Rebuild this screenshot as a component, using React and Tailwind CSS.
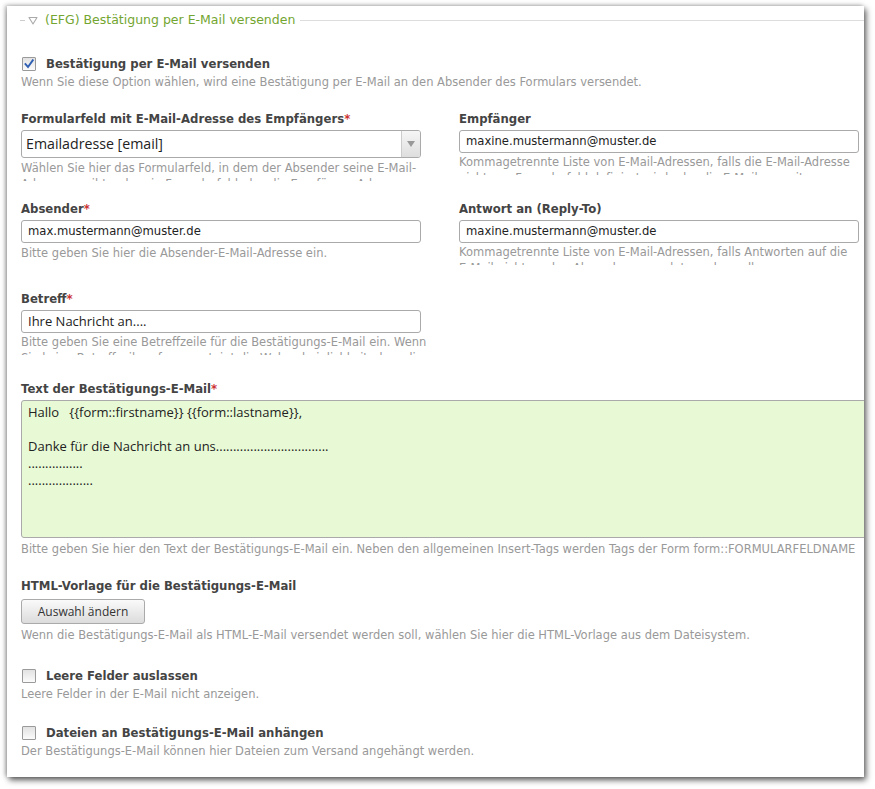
import React from "react";

const dv = { fontFamily: '"DejaVu Sans", Verdana, sans-serif' };
const os = { fontFamily: '"Open Sans", "Noto Sans", sans-serif' };

function Checkbox({ checked }) {
  return (
    <span className="inline-flex w-[14px] h-[14px] shrink-0 items-center justify-center border border-[#9a9a9a] bg-gradient-to-b from-[#e2e2e2] to-[#fbfbfb] rounded-[1px]">
      {checked && (
        <svg width="10" height="10" viewBox="0 0 10 10">
          <path d="M1.5 5.2 L4 8 L8.8 1.2" fill="none" stroke="#2f5fb3" strokeWidth="1.9" strokeLinecap="square" />
        </svg>
      )}
    </span>
  );
}

function Label({ children, req }) {
  return (
    <div className="h-[16px] leading-[16px] text-[11.7px] font-bold text-[#444] whitespace-nowrap" style={dv}>
      {children}
      {req && <span className="text-[#c33]">*</span>}
    </div>
  );
}

function Desc({ children, clip, className = "" }) {
  return (
    <div
      className={"text-[11.5px] leading-[16px] text-[#999] " + (clip ? "h-[21px] overflow-hidden " : "") + className}
      style={dv}
    >
      {children}
    </div>
  );
}

function TextInput({ value }) {
  return (
    <div
      className="mt-[3px] w-[400px] h-[23px] border border-[#aaa] rounded-[3px] bg-white pl-[6px] flex items-center text-[11.6px] text-[#222]"
      style={dv}
    >
      {value}
    </div>
  );
}

function CheckRow({ checked, label, desc }) {
  return (
    <div>
      <div className="flex items-center h-[16px] gap-[10px] pl-[1px]">
        <Checkbox checked={checked} />
        <span className="text-[11.7px] font-bold text-[#444] leading-[16px]" style={dv}>
          {label}
        </span>
      </div>
      <Desc className="mt-[2px]">{desc}</Desc>
    </div>
  );
}

const nw = (t) => <span className="whitespace-nowrap">{t}</span>;

export default function App() {
  return (
    <div className="w-[875px] h-[789px] bg-white">
      <div className="ml-[7px] mt-[6px] w-[857px] h-[771px] bg-white overflow-hidden shadow-[2px_3px_6px_rgba(0,0,0,0.65),-2px_-1px_4px_rgba(0,0,0,0.25)]">
        {/* legend */}
        <div className="mt-[6px] h-[16px] flex items-center">
          <div className="ml-[13px] w-[5px] h-px bg-[#ccc]" />
          <svg className="ml-[3px]" width="10" height="9" viewBox="0 0 10 9">
            <path d="M1 1.5 H9 L5 8 Z" fill="none" stroke="#aaa" strokeWidth="1.1" strokeLinejoin="round" />
          </svg>
          <span className="ml-[7px] text-[12.5px] text-[#73a531] leading-[16px] whitespace-nowrap" style={dv}>
            (EFG) Bestätigung per E-Mail versenden
          </span>
          <div className="ml-[5px] flex-1 h-px bg-[#ddd]" />
        </div>

        <div className="pl-[14px]">
          {/* first checkbox */}
          <div className="mt-[28px]">
            <CheckRow
              checked
              label="Bestätigung per E-Mail versenden"
              desc="Wenn Sie diese Option wählen, wird eine Bestätigung per E-Mail an den Absender des Formulars versendet."
            />
          </div>

          {/* grid rows */}
          <div className="mt-[21px] grid grid-cols-[438px_405px]">
            <div className="h-[90px]">
              <Label req>Formularfeld mit E-Mail-Adresse des Empfängers</Label>
              <div className="mt-[3px] w-[400px] h-[28px] border border-[#aaa] rounded-[3px] bg-white flex items-stretch overflow-hidden">
                <div className="flex-1 flex items-center pl-[4px] text-[14.2px] text-[#222]" style={os}>
                  Emailadresse [email]
                </div>
                <div className="w-[19px] border-l border-[#ccc] bg-gradient-to-b from-[#f6f6f6] to-[#dedede] flex items-center justify-center">
                  <svg width="8" height="6" viewBox="0 0 8 6">
                    <path d="M0 0 H8 L4 6 Z" fill="#999" />
                  </svg>
                </div>
              </div>
              <Desc clip className="mt-[2px] w-[408px]">
                Wählen Sie hier das Formularfeld, in dem der Absender seine E-Mail-Adresse angibt, oder ein Formularfeld, das die Empfänger-Adresse enthält.
              </Desc>
            </div>
            <div className="h-[90px]">
              <Label>Empfänger</Label>
              <TextInput value="maxine.mustermann@muster.de" />
              <Desc clip className="mt-[1px] w-[400px]">
                Kommagetrennte Liste von E-Mail-Adressen, falls die E-Mail-Adresse nicht aus Formularfeld definiert wird oder die E-Mail an weitere Empfänger gehen soll.
              </Desc>
            </div>

            <div className="h-[90px]">
              <Label req>Absender</Label>
              <TextInput value="max.mustermann@muster.de" />
              <Desc className="mt-[2px] w-[408px]">Bitte geben Sie hier die Absender-E-Mail-Adresse ein.</Desc>
            </div>
            <div className="h-[90px]">
              <Label>Antwort an (Reply-To)</Label>
              <TextInput value="maxine.mustermann@muster.de" />
              <Desc clip className="mt-[1px] w-[400px]">
                Kommagetrennte Liste von E-Mail-Adressen, falls Antworten auf die {nw("E-Mail")} nicht an den Absender gesendet werden sollen.
              </Desc>
            </div>

            <div className="h-[90px]">
              <Label req>Betreff</Label>
              <div
                className="mt-[3px] w-[400px] h-[23px] border border-[#aaa] rounded-[3px] bg-white pl-[6px] flex items-center text-[13px] text-[#222]"
                style={os}
              >
                Ihre Nachricht an....
              </div>
              <Desc clip className="mt-[1px] w-[408px]">
                Bitte geben Sie eine Betreffzeile für die Bestätigungs-E-Mail ein. Wenn Sie keine Betreffzeile erfassen, steigt die Wahrscheinlichkeit, dass die E-Mail als SPAM erkannt wird.
              </Desc>
            </div>
            <div className="h-[90px]" />
          </div>

          {/* textarea */}
          <div>
            <Label req>Text der Bestätigungs-E-Mail</Label>
            <div
              className="mt-[3px] w-[860px] h-[138px] border border-[#aaa] rounded-l-[3px] bg-[#e8fad5] pl-[6px] pt-[3px] text-[13px] leading-[17px] text-[#222] whitespace-pre"
              style={os}
            >
              {"Hallo   {{form::firstname}} {{form::lastname}},\n\nDanke für die Nachricht an uns" +
                ".".repeat(33) +
                "\n" +
                ".".repeat(16) +
                "\n" +
                ".".repeat(19)}
            </div>
            <Desc className="mt-[3px] w-[843px] h-[16px] overflow-hidden">
              Bitte geben Sie hier den Text der Bestätigungs-E-Mail ein. Neben den allgemeinen Insert-Tags werden Tags der Form form::FORMULARFELDNAME unterstützt.
            </Desc>
          </div>

          {/* HTML template */}
          <div className="mt-[21px]">
            <Label>HTML-Vorlage für die Bestätigungs-E-Mail</Label>
            <div
              className="mt-[5px] w-[124px] h-[25px] border border-[#aaa] rounded-[3px] bg-gradient-to-b from-[#fafafa] to-[#dcdcdc] flex items-center justify-center text-[12px] text-[#333]"
              style={os}
            >
              Auswahl ändern
            </div>
            <Desc className="mt-[3px]">
              Wenn die Bestätigungs-E-Mail als HTML-E-Mail versendet werden soll, wählen Sie hier die HTML-Vorlage aus dem Dateisystem.
            </Desc>
          </div>

          <div className="mt-[25px]">
            <CheckRow label="Leere Felder auslassen" desc="Leere Felder in der E-Mail nicht anzeigen." />
          </div>
          <div className="mt-[23px]">
            <CheckRow
              label="Dateien an Bestätigungs-E-Mail anhängen"
              desc="Der Bestätigungs-E-Mail können hier Dateien zum Versand angehängt werden."
            />
          </div>
        </div>
      </div>
    </div>
  );
}
